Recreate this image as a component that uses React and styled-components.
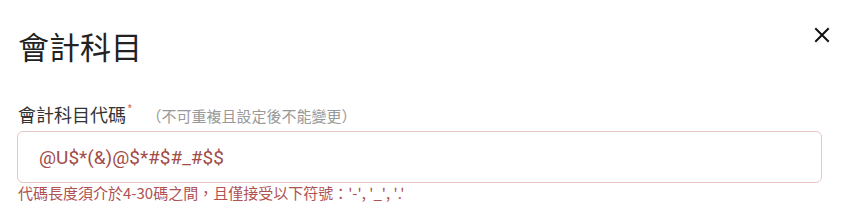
import React from "react";
import styled, { createGlobalStyle } from "styled-components";

const Global = createGlobalStyle`
  html, body { margin: 0; padding: 0; background: #fff; }
  body { font-family: Roboto, "Noto Sans CJK TC", sans-serif; }
`;

const Dialog = styled.div`
  width: 848px;
  height: 210px;
  box-sizing: border-box;
  padding: 26px 18px 0 18px;
  overflow: hidden;
`;

const Header = styled.div`
  display: flex;
  justify-content: space-between;
  align-items: flex-start;
`;

const Title = styled.h2`
  margin: 0;
  font-size: 31px;
  font-weight: 400;
  line-height: 40px;
  color: #222;
  font-family: "Noto Sans CJK TC", sans-serif;
`;

const Close = styled.button`
  border: 0;
  background: none;
  padding: 0;
  margin: -1px -2px 0 0;
  width: 20px;
  height: 20px;
  display: flex;
  align-items: center;
  justify-content: center;
  cursor: pointer;
`;

const Field = styled.div`
  margin-top: 36px;
  display: flex;
  flex-direction: column;
`;

const Label = styled.div`
  display: flex;
  align-items: baseline;
  font-family: "Noto Sans CJK TC", sans-serif;
  font-size: 18px;
  line-height: 24px;
  color: #333;
`;

const Star = styled.span`
  color: #e46a5a;
  font-size: 12px;
  align-self: flex-start;
  line-height: 14px;
  margin-left: 1px;
`;

const Hint = styled.span`
  color: #999;
  font-size: 15px;
  margin-left: 14px;
`;

const Input = styled.input`
  margin-top: 3px;
  width: 805px;
  height: 52px;
  box-sizing: border-box;
  border: 1px solid #e8c6c6;
  border-radius: 6px;
  padding: 0 21px;
  font-family: Roboto, sans-serif;
  font-size: 19px;
  color: #a24b48;
  outline: none;
  margin-left: -1px;
`;

const Error = styled.div`
  font-family: "Noto Sans CJK TC", sans-serif;
  font-size: 15px;
  line-height: 20px;
  color: #b05252;
  margin-top: 0;
`;

export default function App() {
  return (
    <>
      <Global />
      <Dialog>
        <Header>
          <Title>會計科目</Title>
          <Close aria-label="close">
            <svg width="16" height="16" viewBox="0 0 16 16">
              <path d="M2 2L14 14M14 2L2 14" stroke="#111" strokeWidth="2" strokeLinecap="square" />
            </svg>
          </Close>
        </Header>
        <Field>
          <Label>
            會計科目代碼<Star>*</Star>
            <Hint>（不可重複且設定後不能變更）</Hint>
          </Label>
          <Input defaultValue="@U$*(&)@$*#$#_#$$" />
          <Error>代碼長度須介於4-30碼之間，且僅接受以下符號：'-', '_', '.'</Error>
        </Field>
      </Dialog>
    </>
  );
}
